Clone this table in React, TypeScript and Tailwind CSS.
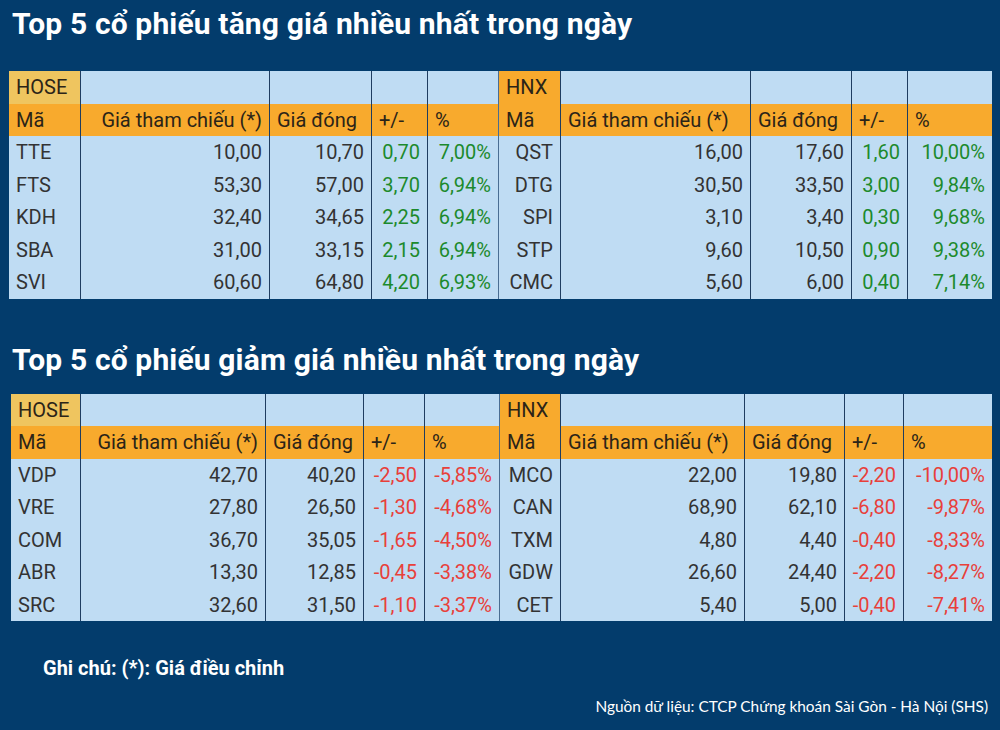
import React from "react";

type Align = "l" | "r";

const topCols = "grid-cols-[72px_189px_102px_56px_71px_62px_190px_101px_56px_84px]";
const botCols = "grid-cols-[70px_185px_98px_61px_75px_61px_184px_100px_59px_88px]";

const headers = ["Mã", "Giá tham chiếu (*)", "Giá đóng", "+/-", "%", "Mã", "Giá tham chiếu (*)", "Giá đóng", "+/-", "%"];
const headerAlign: Align[] = ["l", "r", "l", "l", "l", "l", "l", "l", "l", "l"];
const dataAlign: Align[] = ["l", "r", "r", "r", "r", "r", "r", "r", "r", "r"];

const upRows: string[][] = [
  ["TTE", "10,00", "10,70", "0,70", "7,00%", "QST", "16,00", "17,60", "1,60", "10,00%"],
  ["FTS", "53,30", "57,00", "3,70", "6,94%", "DTG", "30,50", "33,50", "3,00", "9,84%"],
  ["KDH", "32,40", "34,65", "2,25", "6,94%", "SPI", "3,10", "3,40", "0,30", "9,68%"],
  ["SBA", "31,00", "33,15", "2,15", "6,94%", "STP", "9,60", "10,50", "0,90", "9,38%"],
  ["SVI", "60,60", "64,80", "4,20", "6,93%", "CMC", "5,60", "6,00", "0,40", "7,14%"],
];

const downRows: string[][] = [
  ["VDP", "42,70", "40,20", "-2,50", "-5,85%", "MCO", "22,00", "19,80", "-2,20", "-10,00%"],
  ["VRE", "27,80", "26,50", "-1,30", "-4,68%", "CAN", "68,90", "62,10", "-6,80", "-9,87%"],
  ["COM", "36,70", "35,05", "-1,65", "-4,50%", "TXM", "4,80", "4,40", "-0,40", "-8,33%"],
  ["ABR", "13,30", "12,85", "-0,45", "-3,38%", "GDW", "26,60", "24,40", "-2,20", "-8,27%"],
  ["SRC", "32,60", "31,50", "-1,10", "-3,37%", "CET", "5,40", "5,00", "-0,40", "-7,41%"],
];

function borderFor(i: number) {
  if (i === 9) return "";
  if (i === 4) return "border-r border-[#4a6d92]";
  return "border-r border-[#1f3d60]";
}

function Table({ cols, rows, up, ml }: { cols: string; rows: string[][]; up: boolean; ml: string }) {
  const colored = up ? "text-[#1c8a2c]" : "text-[#e8403a]";
  return (
    <div className={`grid ${cols} ${ml} auto-rows-[32.5px] text-[20px] leading-none`}>
      {Array.from({ length: 10 }).map((_, i) => {
        const bg = i === 0 ? "bg-[#efc55f]" : i === 5 ? "bg-[#f8aa2d]" : "bg-[#bfdcf3]";
        const label = i === 0 ? "HOSE" : i === 5 ? "HNX" : "";
        return (
          <div key={"a" + i} className={`${bg} ${borderFor(i)} flex items-center px-[7px] text-[#2b2418]`}>
            {label}
          </div>
        );
      })}
      {headers.map((h, i) => (
        <div
          key={"h" + i}
          className={`bg-[#f8aa2d] ${borderFor(i)} flex items-center px-[7px] text-[#2b2418] ${headerAlign[i] === "r" ? "justify-end" : "justify-start"}`}
        >
          {h}
        </div>
      ))}
      {rows.map((r, ri) =>
        r.map((v, i) => (
          <div
            key={ri + "-" + i}
            className={`bg-[#bfdcf3] ${borderFor(i)} flex items-center px-[7px] ${dataAlign[i] === "r" ? "justify-end" : "justify-start"} ${
              i === 3 || i === 4 || i === 8 || i === 9 ? colored : "text-[#333333]"
            }`}
          >
            {v}
          </div>
        ))
      )}
    </div>
  );
}

export default function App() {
  return (
    <div className="w-[1000px] h-[730px] bg-[#033c6c] overflow-hidden font-['Roboto',sans-serif] flex flex-col">
      <h1 className="mt-[9px] ml-[12px] text-[30px] tracking-[0.15px] font-bold text-white leading-none">
        Top 5 cổ phiếu tăng giá nhiều nhất trong ngày
      </h1>
      <div className="mt-[32px]">
        <Table cols={topCols} rows={upRows} up={true} ml="ml-[9px]" />
      </div>
      <h1 className="mt-[46px] ml-[12px] text-[30px] tracking-[0.15px] font-bold text-white leading-none">
        Top 5 cổ phiếu giảm giá nhiều nhất trong ngày
      </h1>
      <div className="mt-[19px]">
        <Table cols={botCols} rows={downRows} up={false} ml="ml-[11px]" />
      </div>
      <div className="mt-[37px] ml-[43px] text-[20px] font-bold text-white leading-none">
        Ghi chú: (*): Giá điều chỉnh
      </div>
      <div className="mt-[21px] pr-[12px] text-right text-[15.4px] text-white leading-none font-['Lato',sans-serif]">
        Nguồn dữ liệu: CTCP Chứng khoán Sài Gòn - Hà Nội (SHS)
      </div>
    </div>
  );
}
